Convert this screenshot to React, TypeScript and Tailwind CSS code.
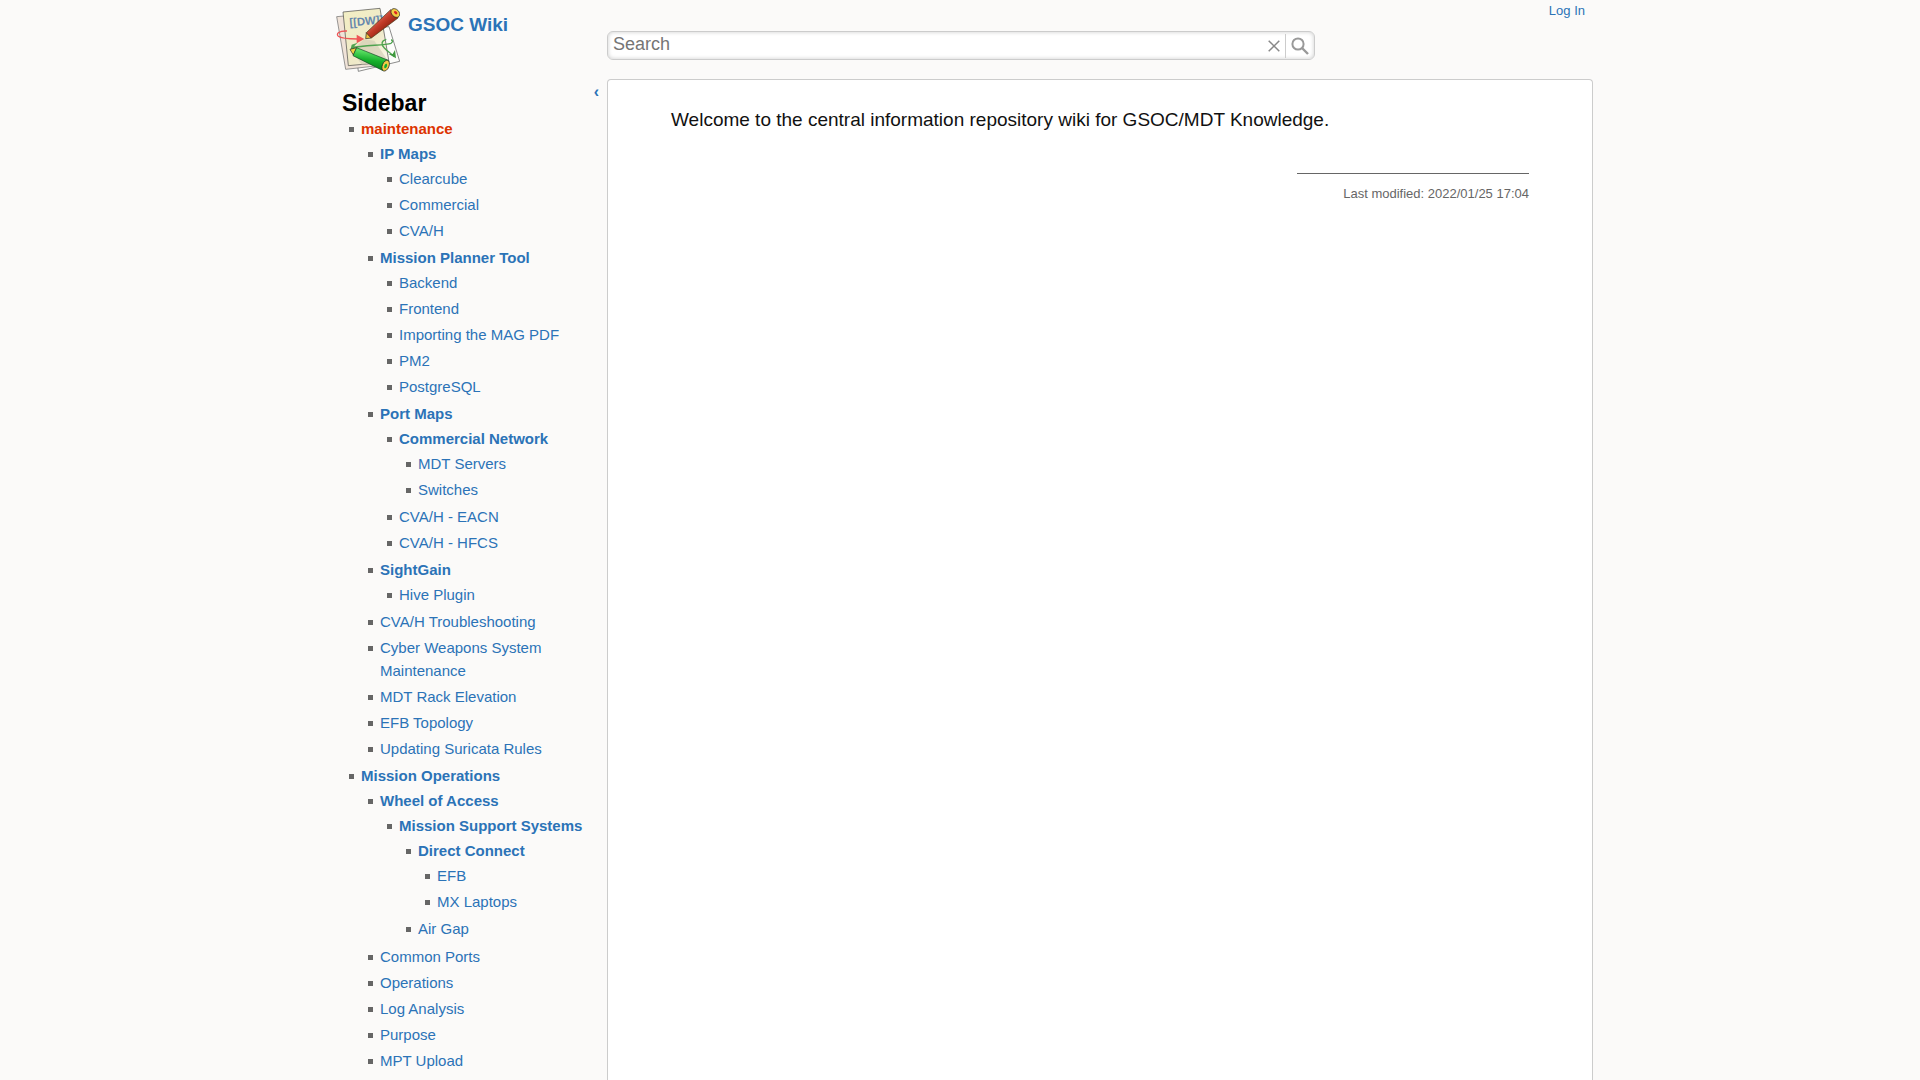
import React from "react";

type Item = { label: string; children?: Item[]; current?: boolean };

const leaf = (...labels: string[]): Item[] => labels.map((label) => ({ label }));

const items: Item[] = [
  {
    label: "maintenance",
    current: true,
    children: [
      { label: "IP Maps", children: leaf("Clearcube", "Commercial", "CVA/H") },
      {
        label: "Mission Planner Tool",
        children: leaf("Backend", "Frontend", "Importing the MAG PDF", "PM2", "PostgreSQL"),
      },
      {
        label: "Port Maps",
        children: [
          { label: "Commercial Network", children: leaf("MDT Servers", "Switches") },
          ...leaf("CVA/H - EACN", "CVA/H - HFCS"),
        ],
      },
      { label: "SightGain", children: leaf("Hive Plugin") },
      ...leaf(
        "CVA/H Troubleshooting",
        "Cyber Weapons System Maintenance",
        "MDT Rack Elevation",
        "EFB Topology",
        "Updating Suricata Rules",
      ),
    ],
  },
  {
    label: "Mission Operations",
    children: [
      {
        label: "Wheel of Access",
        children: [
          {
            label: "Mission Support Systems",
            children: [
              { label: "Direct Connect", children: leaf("EFB", "MX Laptops") },
              ...leaf("Air Gap"),
            ],
          },
        ],
      },
      ...leaf("Common Ports", "Operations", "Log Analysis", "Purpose", "MPT Upload"),
    ],
  },
];

function Tree({ nodes }: { nodes: Item[] }) {
  return (
    <ul className="list-[square] py-px pl-[19px] marker:text-[#666]">
      {nodes.map((node) =>
        node.children ? (
          <li key={node.label} className="leading-6">
            <a
              href="#"
              className={
                node.current ? "-ml-1 block font-bold text-[#d30]" : "-ml-1 block font-bold text-[#2b73b7]"
              }
            >
              {node.label}
            </a>
            <Tree nodes={node.children} />
          </li>
        ) : (
          <li key={node.label} className="mb-[3px] leading-[23px]">
            <a href="#" className="-ml-1 block text-[#2b73b7]">
              {node.label}
            </a>
          </li>
        ),
      )}
    </ul>
  );
}

function Logo() {
  return (
    <svg viewBox="33 21 192 195" className="h-[65px] w-16 shrink-0" aria-hidden="true">
      <defs>
        <linearGradient id="paper" x1="0" y1="0" x2="1" y2="1">
          <stop offset="0" stopColor="#f3efc4" />
          <stop offset="0.6" stopColor="#efe9c8" />
          <stop offset="1" stopColor="#fbfaf0" />
        </linearGradient>
        <linearGradient id="red" x1="0.3" y1="0.3" x2="0.7" y2="0.7">
          <stop offset="0" stopColor="#d9695a" />
          <stop offset="0.45" stopColor="#c23a27" />
          <stop offset="1" stopColor="#8c2010" />
        </linearGradient>
        <linearGradient id="green" x1="0.6" y1="0" x2="0.4" y2="1">
          <stop offset="0.2" stopColor="#5ade62" />
          <stop offset="0.55" stopColor="#16b02c" />
          <stop offset="1" stopColor="#067a18" />
        </linearGradient>
      </defs>
      <path d="M84 90 192 80 224 184 100 214Z" fill="#fdfdfb" stroke="#555" strokeWidth="2" />
      <path d="M35 50 150 40 170 196 62 208Z" fill="#f0e3d8" stroke="#666" strokeWidth="2" />
      <path d="M54 36 165 25 192 186 70 197Z" fill="url(#paper)" stroke="#444" strokeWidth="2" />
      <path d="M118 118 148 122 190 184 110 194 80 150Z" fill="#cfcab2" opacity=".6" />
      <text
        x="74"
        y="79"
        transform="rotate(-5 74 79)"
        fontSize="34"
        fontWeight="bold"
        fontFamily="Liberation Sans, sans-serif"
        fill="#6587ad"
      >
        [[DW]]
      </text>
      <path d="M66 93C42 92 32 101 40 109 50 117 72 117 98 117" fill="none" stroke="#ee5555" strokeWidth="4" />
      <path d="M95 104 118 117 95 130Z" fill="#ee5555" />
      <path d="M80 143C120 135 180 136 198 130 206 124 202 120 198 120" fill="none" stroke="#4fa34f" strokeWidth="4" />
      <path d="M184 118C168 122 168 134 178 144 188 155 200 162 208 170" fill="none" stroke="#4fa34f" strokeWidth="4" />
      <path d="M191 162 203 162 210 150 213 175Z" fill="#3f993f" />
      <path d="M76 152 80 134 98 128 88 138 90 146Z" fill="#4fa34f" />
      <path d="M122 116 124 98 139 114Z" fill="#f0c040" stroke="#222" strokeWidth="2" />
      <path d="M124 98 197 29C206 34 219 44 219 54L139 114Z" fill="url(#red)" stroke="#431" strokeWidth="2" />
      <ellipse cx="211" cy="39" rx="15" ry="11" transform="rotate(45 211 39)" fill="#f2cc45" stroke="#222" strokeWidth="2" />
      <ellipse cx="212" cy="38" rx="6" ry="4" transform="rotate(45 212 38)" fill="#d22" />
      <path d="M75 148 95 143 85 165Z" fill="#f0d040" stroke="#222" strokeWidth="2" />
      <path d="M95 143 190 181C194 190 186 211 174 212L84 167Z" fill="url(#green)" stroke="#142" strokeWidth="2" />
      <ellipse cx="182" cy="197" rx="10" ry="17" transform="rotate(22 182 197)" fill="#f2cc45" stroke="#222" strokeWidth="2" />
      <ellipse cx="182" cy="198" rx="4" ry="7" transform="rotate(22 182 198)" fill="#1a3" />
    </svg>
  );
}

export default function App() {
  return (
    <div className="min-h-screen bg-[#fbfaf9] font-['Liberation_Sans',Arial,sans-serif]">
      <div className="mx-auto flex min-h-screen w-full max-w-[1266px] flex-col">
        <header className="flex h-[79px] shrink-0">
          <div className="w-[280px] shrink-0 px-[9px] pt-[7px]">
            <a href="#" className="flex gap-2">
              <Logo />
              <h1 className="pt-[6px] text-[19px] leading-6 font-bold text-[#2b73b7]">GSOC Wiki</h1>
            </a>
          </div>
          <div className="flex min-w-0 flex-1 flex-col">
            <a href="#" className="mr-2 self-end text-[13px] leading-[21px] text-[#2b73b7]">
              Log In
            </a>
            <form
              role="search"
              onSubmit={(e) => e.preventDefault()}
              className="mt-[10px] flex h-[29px] w-full max-w-[708px] items-center rounded-md border border-[#ccc] bg-white shadow-[inset_0_0_4px_#ccc]"
            >
              <input
                type="text"
                aria-label="Search"
                placeholder="Search"
                className="h-full min-w-0 flex-1 bg-transparent px-[5px] pb-[2px] text-[18px] text-[#222] outline-none placeholder:text-[#757575]"
              />
              <button type="button" aria-label="Clear" className="flex h-6 w-6 items-center justify-center border-r border-[#ccc]">
                <svg viewBox="0 0 12 12" className="size-3" fill="none" stroke="#888" strokeWidth="1.5">
                  <path d="M.7.7 11.3 11.3M11.3.7.7 11.3" />
                </svg>
              </button>
              <button type="submit" aria-label="Search" className="flex h-6 w-7 items-center justify-center">
                <svg viewBox="0 0 18 18" className="size-[18px]" fill="none" stroke="#999">
                  <circle cx="7" cy="7" r="5.6" strokeWidth="2" />
                  <path d="M11 11 17 17" strokeWidth="2.4" />
                </svg>
              </button>
            </form>
          </div>
        </header>
        <div className="flex flex-1">
          <nav aria-label="Sidebar" className="w-[280px] shrink-0 pt-[11px] pr-2 pl-[15px]">
            <div className="flex items-start justify-between">
              <h2 className="text-[23px] leading-[26px] font-bold text-black">Sidebar</h2>
              <button type="button" aria-label="Collapse sidebar" className="text-[16px] leading-1 font-bold text-[#2b73b7]">
                ‹
              </button>
            </div>
            <div className="pl-1 text-[15px]">
              <Tree nodes={items} />
            </div>
          </nav>
          <main className="min-w-0 flex-1 rounded-t border border-b-0 border-[#ccc] bg-white px-[63px] pt-[27px]">
            <p className="text-[19px] leading-[26px] text-[#111]">
              Welcome to the central information repository wiki for GSOC/MDT Knowledge.
            </p>
            <div className="mt-10 ml-auto w-[232px] border-t border-[#666] pt-[10px] text-right text-[13px] leading-5 text-[#666]">
              Last modified: 2022/01/25 17:04
            </div>
          </main>
        </div>
      </div>
    </div>
  );
}
